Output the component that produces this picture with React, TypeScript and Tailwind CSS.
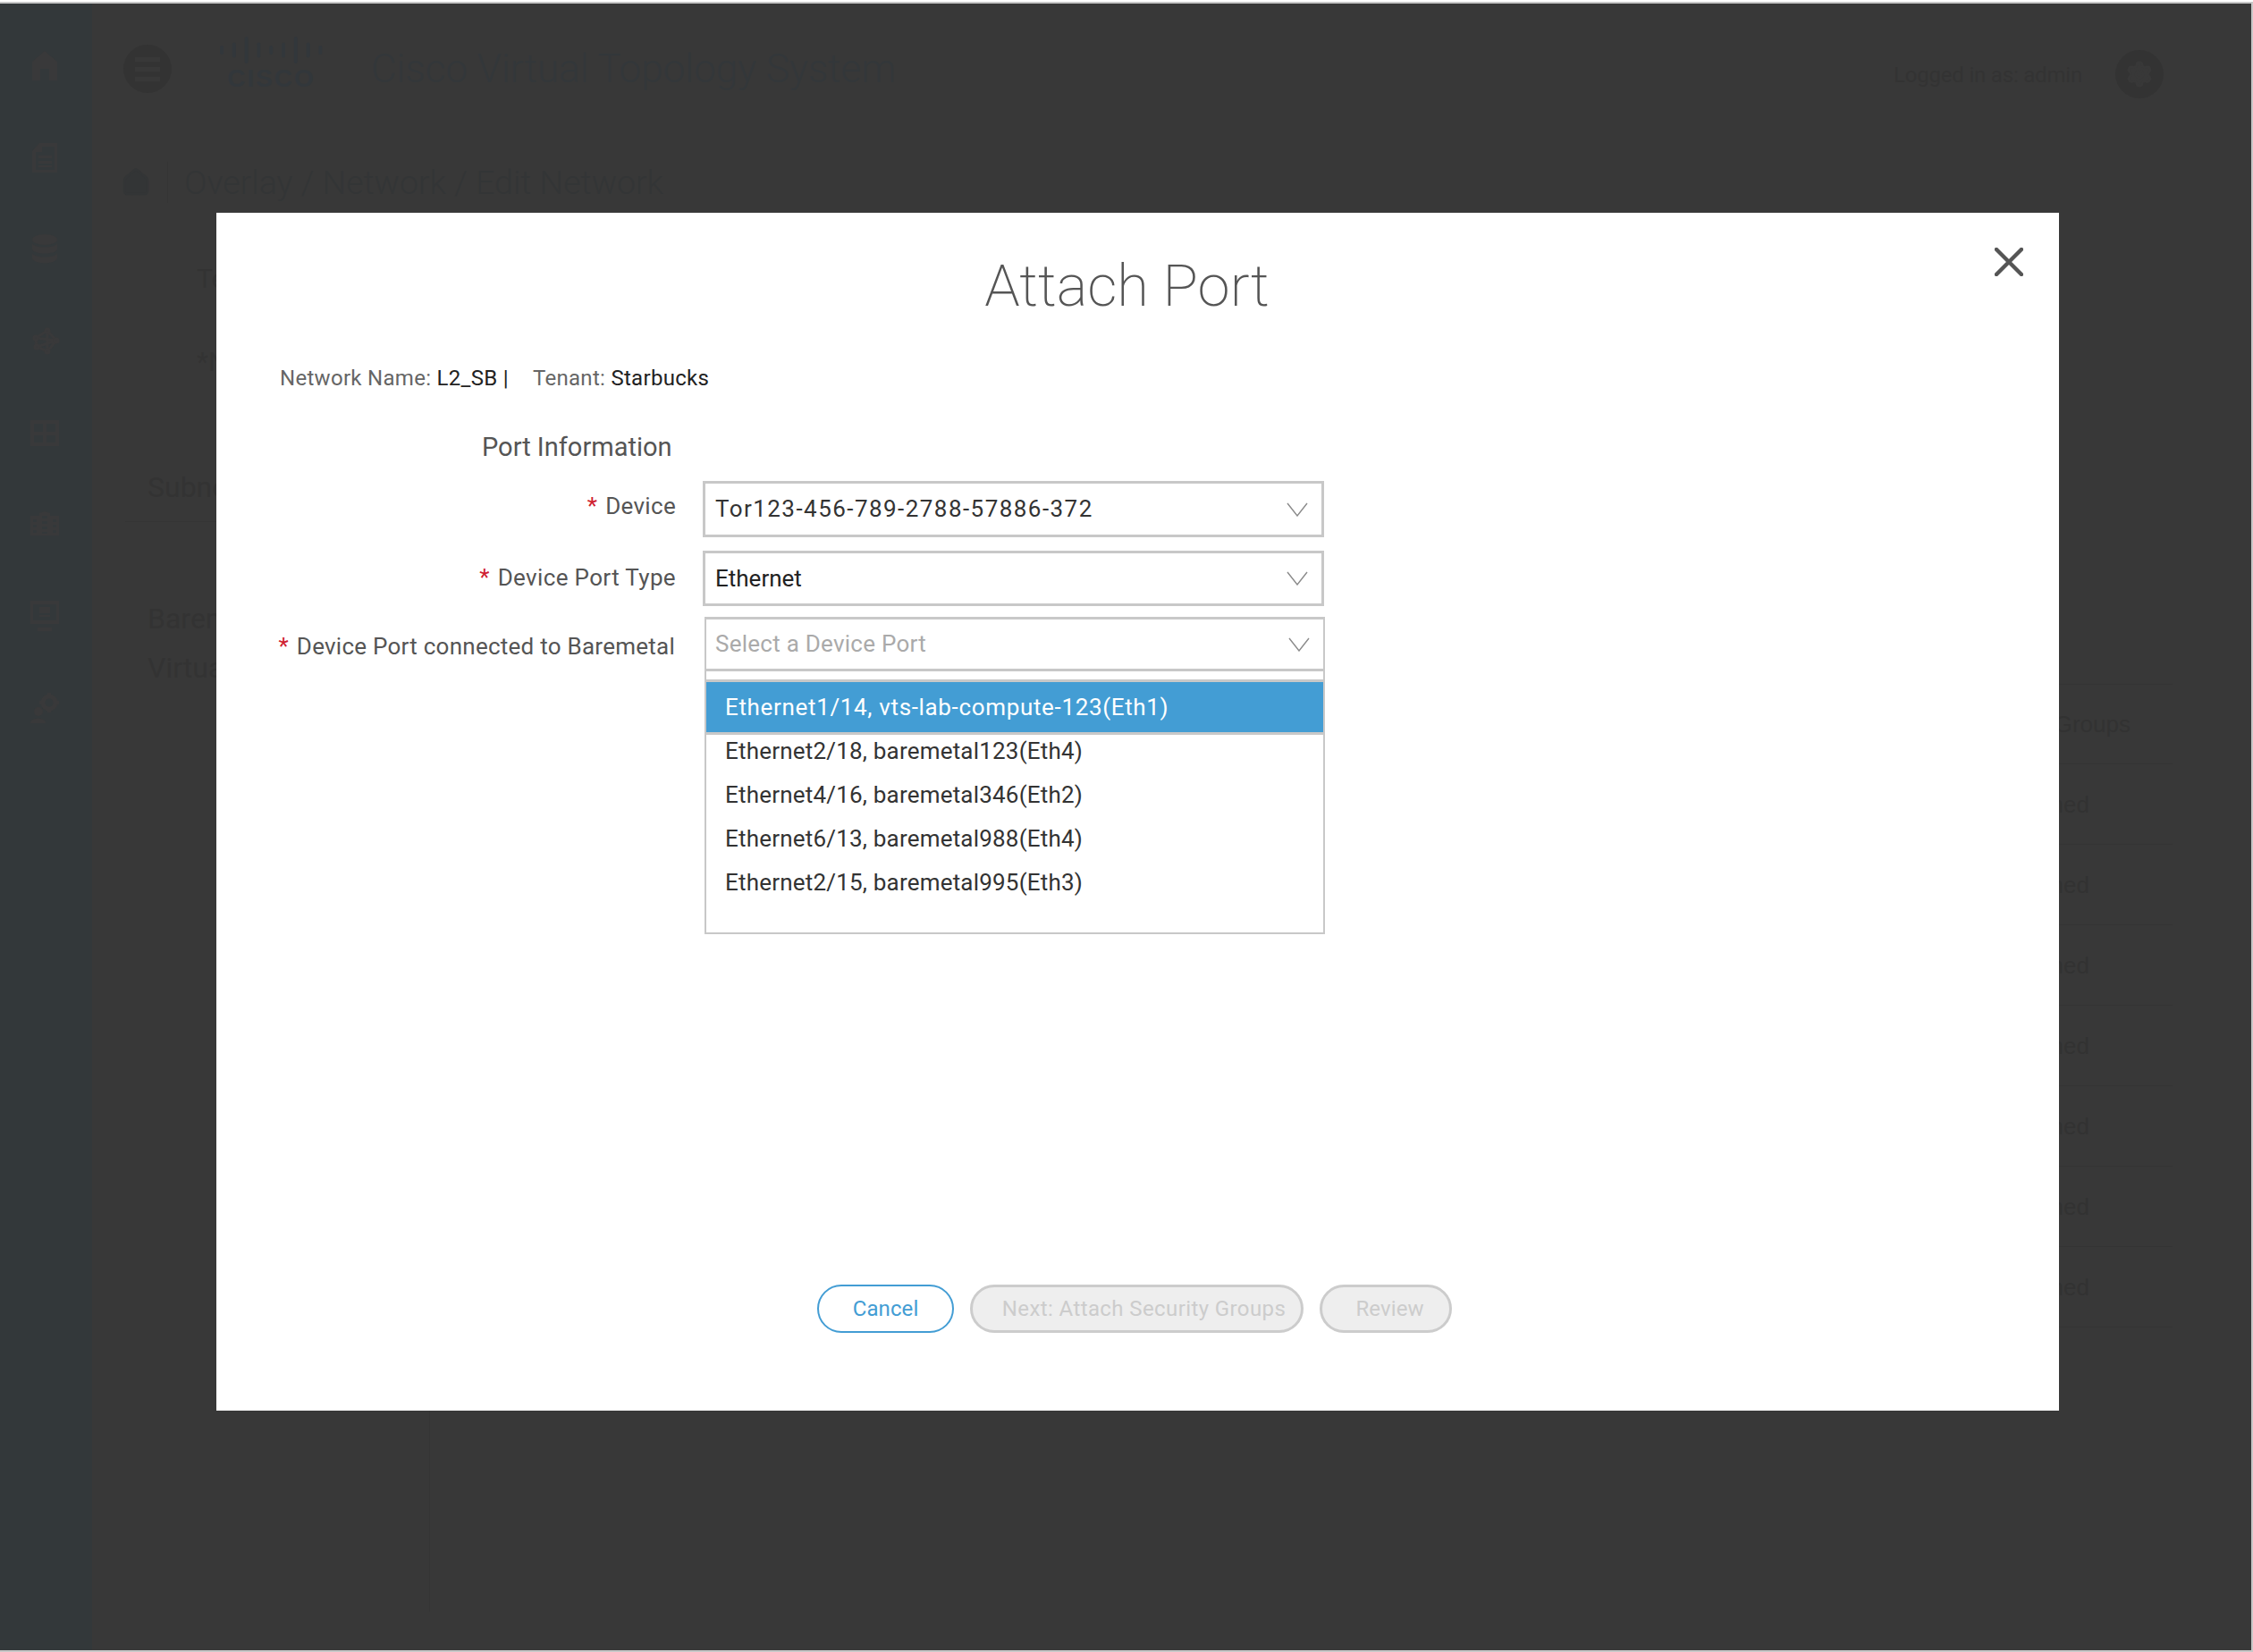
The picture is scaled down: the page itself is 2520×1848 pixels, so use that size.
import React from 'react';
import { Home, Settings } from 'lucide-react';

const font = "font-['Roboto','Liberation_Sans',sans-serif]";
const ports = [
  'Ethernet2/18, baremetal123(Eth4)',
  'Ethernet4/16, baremetal346(Eth2)',
  'Ethernet6/13, baremetal988(Eth4)',
  'Ethernet2/15, baremetal995(Eth3)',
];

// dimmed side nav glyphs, hand drawn because they are solid shapes in the source app
const sideIcons = [
  <path key="home" d="M18 1 L32 13 V34 H23 V21 H13 V34 H4 V13 Z" />,
  <path key="doc" fillRule="evenodd" d="M12 1 H32 V34 H4 V10 Z M8 11 V31 H29 V5 H15 V11 Z M11 15 H26 V18 H11 Z M11 21 H26 V24 H11 Z M11 26 H26 V28 H11 Z" />,
  <g key="db">
    <ellipse cx="18" cy="7" rx="14" ry="6" />
    <path d="M4 11 C6 17 30 17 32 11 V18 C30 24 6 24 4 18 Z" />
    <path d="M4 22 C6 28 30 28 32 22 V28 C30 35 6 35 4 28 Z" />
  </g>,
  <g key="net" fill="none" stroke="currentColor" strokeWidth="3">
    <path d="M8 14 L21 6 L31 17 L21 29 L9 24 Z M8 14 L31 17 M21 6 L21 29 M9 24 L31 17" />
    <circle cx="8" cy="14" r="2" fill="currentColor" />
    <circle cx="21" cy="6" r="2" fill="currentColor" />
    <circle cx="31" cy="17" r="2" fill="currentColor" />
    <circle cx="21" cy="29" r="2" fill="currentColor" />
    <circle cx="9" cy="24" r="2" fill="currentColor" />
  </g>,
  <path key="grid" fillRule="evenodd" d="M2 4 H34 V33 H2 Z M6 8 V17 H16 V8 Z M20 8 V17 H30 V8 Z M6 21 V29 H16 V21 Z M20 21 V29 H30 V21 Z" />,
  <path key="rack" fillRule="evenodd" d="M12 8 V5 L18 3 L24 5 V8 H34 V30 H2 V8 Z M5 12 V15 H9 V12 Z M5 18 V21 H9 V18 Z M5 24 V27 H9 V24 Z M15 8 V11 H21 V8 Z M15 14 V17 H21 V14 Z M15 20 V23 H21 V20 Z M15 26 V28 H21 V26 Z M27 12 V15 H31 V12 Z M27 18 V21 H31 V18 Z M27 24 V27 H31 V24 Z" />,
  <path key="mon" fillRule="evenodd" d="M2 1 H34 V27 H2 Z M5 5 V23 H31 V5 Z M12 8 H24 V15 H12 Z M12 17 H24 V19 H12 Z M10 31 H26 V35 H10 Z" />,
  <g key="gear">
    <circle cx="23" cy="12" r="7" fill="none" stroke="currentColor" strokeWidth="5" />
    <path d="M21 1 H25 V5 H21 Z M21 19 H25 V23 H21 Z M12 10 H16 V14 H12 Z M30 10 H34 V14 H30 Z" />
    <circle cx="11" cy="22" r="5" />
    <path d="M2 35 C2 28 19 28 19 35 Z" />
  </g>,
];

function Chevron() {
  return (
    <svg width="24" height="16" viewBox="0 0 24 16" fill="none" className="shrink-0">
      <path d="M1 1 L12 15 L23 1" stroke="#8a8a8a" strokeWidth="1.4" />
    </svg>
  );
}

function Req() {
  return <span className="text-[#cf2030] mr-[9px]">*</span>;
}

function CiscoLogo() {
  const bars = [10, 17, 30, 17, 10, 17, 30, 17, 10];
  return (
    <div className="flex flex-col items-center w-[117px] gap-[3px] mb-[14px]">
      <svg width="117" height="32" viewBox="0 0 117 32" className="block">
        {bars.map((h, i) => (
          <rect key={i} x={1 + i * 13.8} y={16 - h / 2} width="4" height={h} rx="2" fill="#32373b" />
        ))}
      </svg>
      <span className="font-['Liberation_Sans',sans-serif] text-[28px] leading-[26px] font-bold tracking-[2px] text-[#32373b]">CISCO</span>
    </div>
  );
}

export default function App() {
  return (
    <div className={`relative w-[2520px] h-[1848px] overflow-hidden bg-[#383838] flex flex-col ${font}`}>
      <div className="h-[2px] bg-white shrink-0" />
      <div className="h-[2px] bg-[#c8c8c8] shrink-0" />
      <div className="flex flex-1 min-h-0">
        <aside className="w-[103px] shrink-0 bg-[#33383a] flex flex-col items-center pt-[52px] gap-[66.5px] pr-[3px]">
          {sideIcons.map((icon, i) => (
            <svg key={i} width="36" height="36" viewBox="0 0 36 36" fill="currentColor" className="block text-[#39393a]">{icon}</svg>
          ))}
        </aside>

        {/* dimmed page behind the dialog */}
        <main className="flex-1 min-w-0 flex flex-col">
          <header className="h-[146px] shrink-0 flex items-center pl-[35px] pr-[100px]">
            <div className="w-[54px] h-[54px] rounded-full bg-[#333] flex flex-col items-center justify-center gap-[6px]">
              <span className="w-[28px] h-[5px] bg-[#383838]" />
              <span className="w-[28px] h-[5px] bg-[#383838]" />
              <span className="w-[28px] h-[5px] bg-[#383838]" />
            </div>
            <div className="ml-[53px]"><CiscoLogo /></div>
            <span className="ml-[53px] text-[44px] font-light text-[#33373a]">Cisco Virtual Topology System</span>
            <span className="ml-auto mt-[14px] text-[24px] tracking-[-0.2px] text-[#333]">Logged in as: admin</span>
            <div className="ml-[37px] mt-[12px] w-[54px] h-[54px] rounded-full bg-[#333] flex items-center justify-center">
              <Settings size={32} color="#383838" fill="#383838" />
            </div>
          </header>
          <div className="h-[108px] shrink-0 flex items-center pl-[32px]">
            <Home size={34} color="#333536" fill="#333536" />
            <span className="ml-[18px] h-[46px] border-l border-[#343434]" />
            <span className="ml-[18px] text-[37.5px] font-light text-[#333536]">Overlay / Network / Edit Network</span>
          </div>
          <div className="flex flex-1 min-h-0">
            <div className="w-[1900px] shrink-0 pl-[37px] text-[#333]">
              <div className="pl-[80px] pt-[36px] text-[30px] leading-[36px]">Tenant</div>
              <div className="pl-[80px] pt-[57px] text-[30px] leading-[36px]">*Name</div>
              <div className="pt-[102px] pb-[18px] pl-[25px] text-[32px] leading-[40px] border-b border-[#343434]">Subnets</div>
              <div className="pt-[88px] pl-[25px] text-[32px] leading-[40px]">Baremetal</div>
              <div className="pt-[15px] pl-[25px] text-[32px] leading-[40px]">Virtual</div>
              <div className="ml-[340px] mt-[18px] h-[1018px] border-l border-[#353535]" />
            </div>
            <div className="w-[427px] shrink-0 pt-[507px] font-['Liberation_Sans',sans-serif] text-[26px] leading-[28px] text-[#323232] flex flex-col">
              <div className="h-[90px] border-y border-[#343434] flex items-center justify-end pr-[47px]">Security Groups</div>
              {Array.from({ length: 7 }).map((_, i) => (
                <div key={i} className="h-[90px] border-b border-[#343434] flex items-center justify-end pr-[93px]">Attached</div>
              ))}
            </div>
          </div>
        </main>
      </div>
      <div className="h-[2px] bg-[#c8c8c8] shrink-0" />
      <div className="absolute right-0 top-[2px] bottom-0 w-[2px] bg-[#c8c8c8]" />

      {/* Attach Port dialog */}
      <section className="absolute left-[242px] top-[238px] w-[2061px] h-[1340px] bg-white flex flex-col">
        <button className="absolute right-[40px] top-[39px]">
          <svg width="32" height="32" viewBox="0 0 32 32" className="block">
            <path d="M2 2 L30 30 M30 2 L2 30" stroke="#555" strokeWidth="4.5" strokeLinecap="round" />
          </svg>
        </button>
        <h1 className="pt-[43px] pr-[24px] text-center text-[65px] leading-[78px] font-[200] text-[#555]">Attach Port</h1>
        <div className="mt-[48px] ml-[71px] text-[24px] leading-[32px] tracking-[0.3px] text-[#666]">
          Network Name: <span className="text-[#222]">L2_SB |</span>
          <span className="ml-[27px]">Tenant: </span><span className="text-[#222]">Starbucks</span>
        </div>
        <div className="mt-[43px] ml-[297px] text-[29px] leading-[36px] text-[#555]">Port Information</div>

        <div className="mt-[20px] flex">
          <label className="w-[514px] shrink-0 text-right text-[26px] leading-[56px] tracking-[0.3px] text-[#555]"><Req />Device</label>
          <div className="ml-[30px] w-[695px] h-[63px] border-[3px] border-[#c8c8c8] flex items-center justify-between pl-[11px] pr-[15px] text-[26px] tracking-[1.45px] text-[#333]">
            <span>Tor123-456-789-2788-57886-372</span>
            <Chevron />
          </div>
        </div>
        <div className="mt-[15px] flex">
          <label className="w-[514px] shrink-0 text-right text-[26px] leading-[60px] tracking-[0.35px] text-[#555]"><Req />Device Port Type</label>
          <div className="ml-[30px] w-[695px] h-[62px] border-[3px] border-[#c8c8c8] flex items-center justify-between pl-[11px] pr-[15px] text-[26px] text-[#222]">
            <span>Ethernet</span>
            <Chevron />
          </div>
        </div>
        <div className="mt-[12px] flex">
          <label className="w-[513px] shrink-0 text-right text-[26px] leading-[66px] tracking-[0.25px] text-[#555]"><Req />Device Port connected to Baremetal</label>
          <div className="ml-[33px] w-[694px] flex flex-col border-x-[2px] border-[#c8c8c8]">
            <div className="h-[61px] border-y-[3px] border-[#c8c8c8] flex items-center justify-between pl-[10px] pr-[15px] text-[26px] tracking-[0.25px] text-[#aaa]">
              <span>Select a Device Port</span>
              <Chevron />
            </div>
            <div className="h-[9px]" />
            <div className="h-[62px] border-y-[3px] border-[#c8c8c8] bg-[#439dd4] text-white text-[26px] tracking-[0.66px] flex items-center pl-[21px]">
              Ethernet1/14, vts-lab-compute-123(Eth1)
            </div>
            <div className="-mt-[6px] flex flex-col pb-[31px] border-b-[2px] border-[#c8c8c8]">
              {ports.map(p => (
                <div key={p} className="h-[49px] flex items-center pl-[21px] text-[26px] tracking-[0.2px] text-[#333]">{p}</div>
              ))}
            </div>
          </div>
        </div>

        <div className="absolute left-[672px] top-[1199px] flex gap-[18px] text-[24px] tracking-[0.1px]">
          <button className="h-[54px] w-[153px] rounded-full border-2 border-[#439dd4] text-[#439dd4] bg-white">Cancel</button>
          <button className="h-[54px] w-[373px] pl-[16px] rounded-full border-[3px] border-[#ccc] text-[#ccc] bg-[#eee] tracking-[0.4px]">Next: Attach Security Groups</button>
          <button className="h-[54px] w-[148px] pl-[9px] rounded-full border-[3px] border-[#ccc] text-[#ccc] bg-[#eee]">Review</button>
        </div>
      </section>
    </div>
  );
}
